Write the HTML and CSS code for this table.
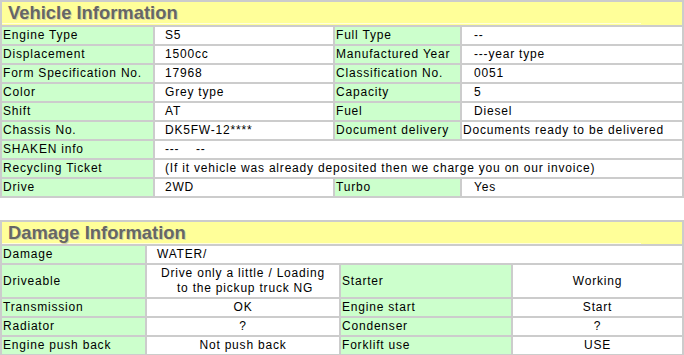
FILE: index.html
```html
<!DOCTYPE html>
<html>
<head>
<meta charset="utf-8">
<link rel="stylesheet" href="styles.css">
</head>
<body>
<table class="info vehicle">
  <colgroup><col class="c1"><col class="c2"><col class="c3"><col class="c4"></colgroup>
  <tr><td colspan="4" class="head"><h2>Vehicle Information</h2></td></tr>
  <tr><td class="lbl">Engine Type</td><td class="val">S5</td><td class="lbl">Full Type</td><td class="val2">--</td></tr>
  <tr><td class="lbl">Displacement</td><td class="val">1500cc</td><td class="lbl">Manufactured Year</td><td class="val2">---year type</td></tr>
  <tr><td class="lbl">Form Specification No.</td><td class="val">17968</td><td class="lbl">Classification No.</td><td class="val2">0051</td></tr>
  <tr><td class="lbl">Color</td><td class="val">Grey type</td><td class="lbl">Capacity</td><td class="val2">5</td></tr>
  <tr><td class="lbl">Shift</td><td class="val">AT</td><td class="lbl">Fuel</td><td class="val2">Diesel</td></tr>
  <tr><td class="lbl">Chassis No.</td><td class="val">DK5FW-12****</td><td class="lbl">Document delivery</td><td class="val3">Documents ready to be delivered</td></tr>
  <tr><td class="lbl">SHAKEN info</td><td class="val" colspan="3">---&nbsp;&nbsp;&nbsp;&nbsp;--</td></tr>
  <tr><td class="lbl">Recycling Ticket</td><td class="val" colspan="3">(If it vehicle was already deposited then we charge you on our invoice)</td></tr>
  <tr><td class="lbl">Drive</td><td class="val">2WD</td><td class="lbl">Turbo</td><td class="val2">Yes</td></tr>
</table>

<table class="info damage">
  <colgroup><col class="d1"><col class="d2"><col class="d3"><col class="d4"></colgroup>
  <tr><td colspan="4" class="head"><h2>Damage Information</h2></td></tr>
  <tr><td class="lbl">Damage</td><td class="val" colspan="3">WATER/</td></tr>
  <tr class="tall"><td class="lbl">Driveable</td><td class="ctr">Drive only a little / Loading<br>&nbsp;to the pickup truck NG</td><td class="lbl">Starter</td><td class="ctr">Working</td></tr>
  <tr><td class="lbl">Transmission</td><td class="ctr">OK</td><td class="lbl">Engine start</td><td class="ctr">Start</td></tr>
  <tr><td class="lbl">Radiator</td><td class="ctr">?</td><td class="lbl">Condenser</td><td class="ctr">?</td></tr>
  <tr><td class="lbl">Engine push back</td><td class="ctr">Not push back</td><td class="lbl">Forklift use</td><td class="ctr">USE</td></tr>
</table>
</body>
</html>
```

FILE: styles.css
```css
html, body {
  margin: 0;
  padding: 0;
  background: #ffffff;
}

body {
  font-family: "Liberation Sans", Arial, sans-serif;
  font-size: 12px;
  color: #000000;
}

.info {
  width: 684px;
  table-layout: fixed;
  border-collapse: separate;
  border-spacing: 2px;
  background: #cccccc;
}

.damage {
  margin-top: 22px;
}

.c1 { width: 151px; }
.c2 { width: 178px; }
.c3 { width: 125px; }
.c4 { width: 220px; }

.d1 { width: 143px; }
.d2 { width: 192px; }
.d3 { width: 170px; }
.d4 { width: 169px; }

.info td {
  padding: 0;
  height: 17px;
  line-height: 15px;
  letter-spacing: 0.8px;
  white-space: nowrap;
  vertical-align: middle;
}

.info .tall td {
  height: 32px;
}

.head {
  background: #ffff99;
  padding: 0 0 1px 0 !important;
}

.damage .head {
  height: 21px !important;
  padding: 0 !important;
}

.head h2 {
  margin: 0;
  width: 94%;
  padding: 1px 0 0 6px;
  box-sizing: border-box;
  font-family: "Liberation Sans", Arial, sans-serif;
  font-size: 18.4px;
  font-weight: bold;
  line-height: 20px;
  letter-spacing: 0;
  color: #666666;
  text-shadow: 1px 1px 0 #d8d8a0;
  border-bottom: 1px solid #ffffdd;
}

.lbl {
  background: #ccffcc;
  padding-left: 1px !important;
}

.val, .val2, .val3, .ctr {
  background: #ffffff;
}

.val { padding-left: 10px !important; }
.val2 { padding-left: 12px !important; }
.val3 { padding-left: 1px !important; }

.ctr {
  text-align: center;
}
```
